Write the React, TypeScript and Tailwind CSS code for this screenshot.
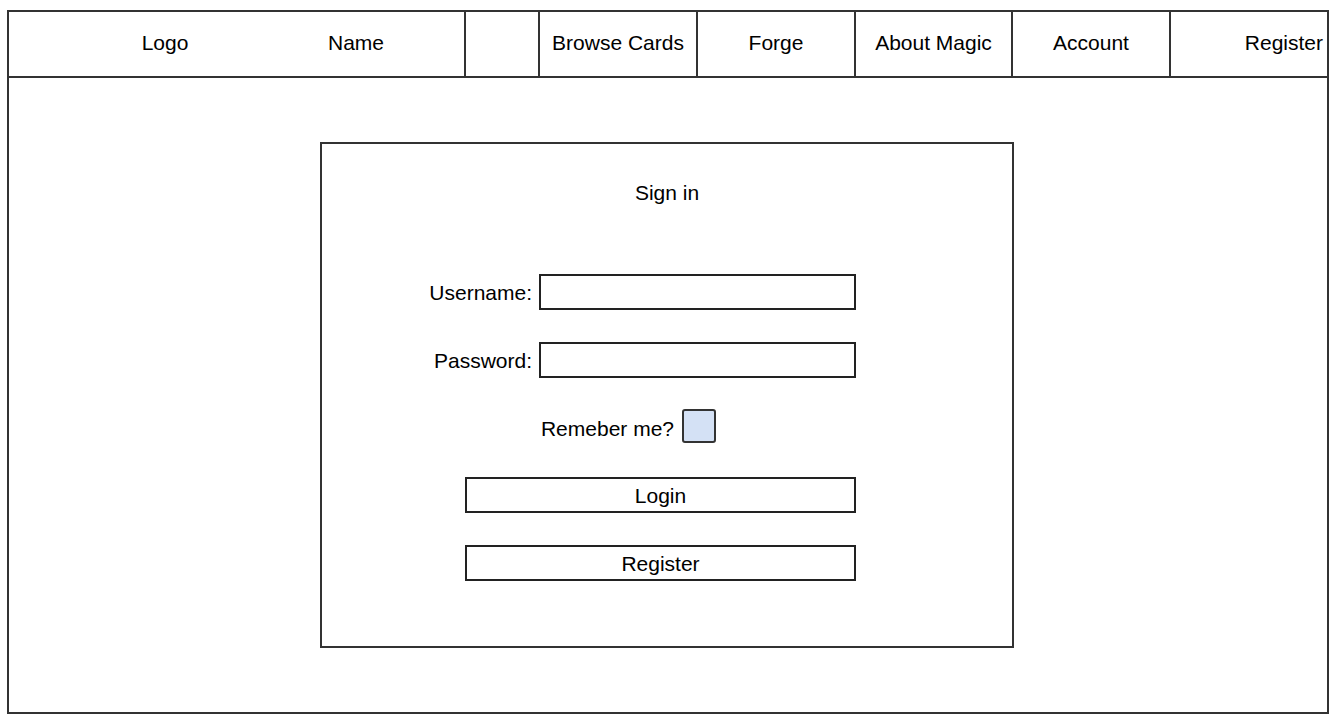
import React from "react";

const navItems = [
  { label: "", w: "w-[74px]" },
  { label: "Browse Cards", w: "w-[158px]" },
  { label: "Forge", w: "w-[158px]" },
  { label: "About Magic", w: "w-[157px]" },
  { label: "Account", w: "w-[158px]" },
];

export default function App() {
  return (
    <div
      className="w-[1340px] h-[721px] bg-white pt-[10px] pl-[7px] text-black text-[21px]"
      style={{ fontFamily: '"Liberation Sans", Arial, Helvetica, sans-serif' }}
    >
      <div className="w-[1322px] h-[704px] border-2 border-[#333] flex flex-col">
        {/* Header */}
        <div className="h-[66px] flex border-b-2 border-[#333] shrink-0">
          <div className="w-[457px] flex items-center border-r-2 border-[#333] pb-[2px]">
            <span className="w-[312px] text-center">Logo</span>
            <span className="w-[70px] text-center">Name</span>
          </div>
          {navItems.map((n, i) => (
            <div
              key={i}
              className={`${n.w} flex items-center justify-center border-r-2 border-[#333] pb-[2px]`}
            >
              {n.label}
            </div>
          ))}
          <div className="flex-1 flex items-center justify-end pr-[4px] pb-[2px]">Register</div>
        </div>

        {/* Body */}
        <div className="flex-1 pt-[64px] pl-[311px]">
          <div className="w-[694px] h-[506px] border-2 border-[#333] flex flex-col pt-[37px]">
            <div className="text-center leading-[24px]">Sign in</div>
            <div className="w-[436px] ml-[98px] mt-[69px] flex flex-col">
              <div className="flex justify-end items-center gap-[7px] h-[36px]">
                <span className="whitespace-nowrap pt-[2px]">Username:</span>
                <div className="w-[317px] h-[36px] border-2 border-[#222]" />
              </div>
              <div className="flex justify-end items-center gap-[7px] h-[36px] mt-[32px]">
                <span className="whitespace-nowrap pt-[2px]">Password:</span>
                <div className="w-[317px] h-[36px] border-2 border-[#222]" />
              </div>
              <div className="flex justify-end items-center gap-[8px] h-[34px] mt-[31px] pr-[140px]">
                <span className="whitespace-nowrap pt-[5px]">Remeber me?</span>
                <div className="w-[34px] h-[34px] border-2 border-[#333] rounded-[3px] bg-[#d4e1f5]" />
              </div>
              <div className="self-end w-[391px] h-[36px] mt-[34px] border-2 border-[#222] flex items-center justify-center pt-[2px]">
                Login
              </div>
              <div className="self-end w-[391px] h-[36px] mt-[32px] border-2 border-[#222] flex items-center justify-center pt-[2px]">
                Register
              </div>
            </div>
          </div>
        </div>
      </div>
    </div>
  );
}
